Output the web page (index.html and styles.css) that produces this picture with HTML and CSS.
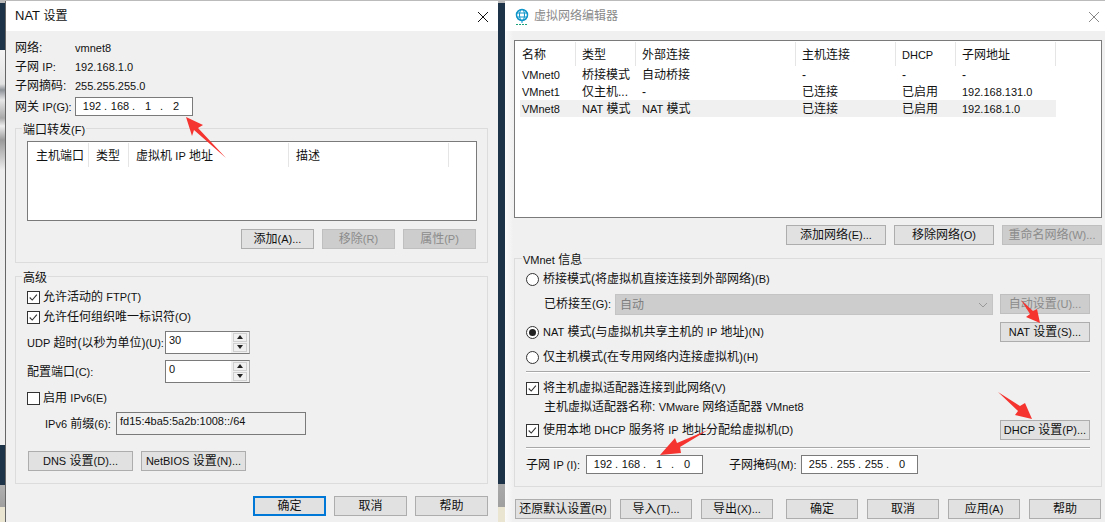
FILE: index.html
```html
<!DOCTYPE html>
<html lang="zh-CN">
<head>
<meta charset="utf-8">
<title>NAT 设置</title>
<link rel="stylesheet" href="styles.css">
</head>
<body>
<div class="desktop">
  <div class="strip"></div>

  <section class="win win-nat">
    <header class="titlebar">
      <h1 class="title"><span class="title-en">NAT</span> 设置</h1>
      <svg class="close" viewBox="0 0 10 10" width="10" height="10"><path d="M0 0L10 10M10 0L0 10" stroke="#111" stroke-width="1" fill="none"/></svg>
    </header>
    <div class="body">
      <div class="info">
        <span>网络:</span><span class="en">vmnet8</span>
        <span>子网 <span class="en">IP:</span></span><span class="en">192.168.1.0</span>
        <span>子网摘码:</span><span class="en">255.255.255.0</span>
      </div>
      <div class="gateway">
        <span>网关 <span class="en">IP(G):</span></span>
        <div class="ip"><span>192</span><i>.</i><span>168</span><i>.</i><span>1</span><i>.</i><span>2</span></div>
      </div>

      <fieldset class="group group-ports">
        <legend><span>端口转发<span class="en">(F)</span></span></legend>
        <div class="list list-ports">
          <div class="head ports-cols">
            <span>主机端口</span><span>类型</span><span>虚拟机 <span class="en">IP</span> 地址</span><span>描述</span>
          </div>
        </div>
        <div class="actions actions-ports">
          <button class="btn">添加<span class="en">(A)...</span></button>
          <button class="btn off">移除<span class="en">(R)</span></button>
          <button class="btn off">属性<span class="en">(P)</span></button>
        </div>
      </fieldset>

      <fieldset class="group group-adv">
        <legend><span>高级</span></legend>
        <label class="check-row"><span class="box"><svg viewBox="0 0 13 13" width="11" height="11"><path d="M2 6.5L5 9.5L10.500 3" stroke="#333" stroke-width="1.300" fill="none"/></svg></span><span>允许活动的 <span class="en">FTP(T)</span></span></label>
        <label class="check-row"><span class="box"><svg viewBox="0 0 13 13" width="11" height="11"><path d="M2 6.5L5 9.5L10.500 3" stroke="#333" stroke-width="1.300" fill="none"/></svg></span><span>允许任何组织唯一标识符<span class="en">(O)</span></span></label>
        <div class="spin-row first">
          <span><span class="en">UDP</span> 超时(以秒为单位)<span class="en">(U):</span></span>
          <div class="spin">
            <span class="spin-val en">30</span>
            <div class="spin-btns"><b class="up"></b><b class="down"></b></div>
          </div>
        </div>
        <div class="spin-row">
          <span>配置端口<span class="en">(C):</span></span>
          <div class="spin">
            <span class="spin-val en">0</span>
            <div class="spin-btns"><b class="up"></b><b class="down"></b></div>
          </div>
        </div>
        <label class="check-row v6"><span class="box"></span><span>启用 <span class="en">IPv6(E)</span></span></label>
        <div class="prefix">
          <span><span class="en">IPv6</span> 前缀<span class="en">(6):</span></span>
          <div class="prefix-box en">fd15:4ba5:5a2b:1008::/64</div>
        </div>
        <div class="actions actions-net">
          <button class="btn wide"><span class="en">DNS</span> 设置<span class="en">(D)...</span></button>
          <button class="btn wide"><span class="en">NetBIOS</span> 设置<span class="en">(N)...</span></button>
        </div>
      </fieldset>

      <div class="actions footer-nat">
        <button class="btn primary">确定</button>
        <button class="btn">取消</button>
        <button class="btn">帮助</button>
      </div>
    </div>
  </section>

  <section class="win win-vne">
    <header class="titlebar">
      <svg class="globe" viewBox="0 0 14 18" width="14" height="18">
        <circle cx="7" cy="7" r="5.500" fill="none" stroke="#0d94c9" stroke-width="1.500"/>
        <ellipse cx="7" cy="7" rx="2.500" ry="5.500" fill="none" stroke="#0d94c9"/>
        <path d="M1.500 5H12.500M1.500 9H12.500M7 13V15" stroke="#0d94c9" fill="none"/>
        <path d="M1 16.500H13" stroke="#1aa37a" stroke-dasharray="2 1" fill="none"/>
      </svg>
      <h1 class="title title-dim">虚拟网络编辑器</h1>
      <svg class="close close-dim" viewBox="0 0 10 10" width="10" height="10"><path d="M0 0L10 10M10 0L0 10" stroke="#888" stroke-width="1" fill="none"/></svg>
    </header>
    <div class="body body-vne">
      <div class="list list-nets">
        <div class="head nets-cols">
          <span>名称</span><span>类型</span><span>外部连接</span><span>主机连接</span><span class="en">DHCP</span><span>子网地址</span>
        </div>
        <div class="net nets-cols">
          <span class="en">VMnet0</span><span>桥接模式</span><span>自动桥接</span><span>-</span><span>-</span><span>-</span>
        </div>
        <div class="net nets-cols">
          <span class="en">VMnet1</span><span>仅主机...</span><span>-</span><span>已连接</span><span>已启用</span><span class="en">192.168.131.0</span>
        </div>
        <div class="net nets-cols sel">
          <span class="en">VMnet8</span><span><span class="en">NAT</span> 模式</span><span><span class="en">NAT</span> 模式</span><span>已连接</span><span>已启用</span><span class="en">192.168.1.0</span>
        </div>
      </div>
      <div class="actions actions-nets">
        <button class="btn net-btn">添加网络<span class="en">(E)...</span></button>
        <button class="btn net-btn">移除网络<span class="en">(O)</span></button>
        <button class="btn net-btn off">重命名网络<span class="en">(W)...</span></button>
      </div>

      <fieldset class="group group-vm">
        <legend><span><span class="en">VMnet</span> 信息</span></legend>
        <label class="opt opt-first"><span class="radio"></span><span>桥接模式(将虚拟机直接连接到外部网络)<span class="en">(B)</span></span></label>
        <div class="bridge">
          <span class="bridge-label">已桥接至<span class="en">(G):</span></span>
          <div class="select"><span>自动</span>
            <svg viewBox="0 0 10 6" width="10" height="6"><path d="M1 1L5 5L9 1" stroke="#999" fill="none"/></svg>
          </div>
          <button class="btn side off">自动设置<span class="en">(U)...</span></button>
        </div>
        <div class="opt-line">
          <label class="opt"><span class="radio on"></span><span><span class="en">NAT</span> 模式(与虚拟机共享主机的 <span class="en">IP</span> 地址)<span class="en">(N)</span></span></label>
          <button class="btn side"><span class="en">NAT</span> 设置<span class="en">(S)...</span></button>
        </div>
        <label class="opt opt-host"><span class="radio"></span><span>仅主机模式(在专用网络内连接虚拟机)<span class="en">(H)</span></span></label>
        <hr class="rule rule-a">
        <label class="opt"><span class="box"><svg viewBox="0 0 13 13" width="11" height="11"><path d="M2 6.500L5 9.500L10.500 3" stroke="#333" stroke-width="1.300" fill="none"/></svg></span><span>将主机虚拟适配器连接到此网络<span class="en">(V)</span></span></label>
        <div class="adapter">主机虚拟适配器名称: <span class="en">VMware</span> 网络适配器 <span class="en">VMnet8</span></div>
        <div class="opt-line opt-dhcp">
          <label class="opt"><span class="box"><svg viewBox="0 0 13 13" width="11" height="11"><path d="M2 6.500L5 9.500L10.500 3" stroke="#333" stroke-width="1.300" fill="none"/></svg></span><span>使用本地 <span class="en">DHCP</span> 服务将 <span class="en">IP</span> 地址分配给虚拟机<span class="en">(D)</span></span></label>
          <button class="btn side"><span class="en">DHCP</span> 设置<span class="en">(P)...</span></button>
        </div>
        <hr class="rule rule-b">
        <div class="subnet">
          <span class="subnet-label">子网 <span class="en">IP (I):</span></span>
          <div class="ip ip-sub"><span>192</span><i>.</i><span>168</span><i>.</i><span>1</span><i>.</i><span>0</span></div>
          <span class="mask-label">子网掩码<span class="en">(M):</span></span>
          <div class="ip ip-sub"><span>255</span><i>.</i><span>255</span><i>.</i><span>255</span><i>.</i><span>0</span></div>
        </div>
      </fieldset>

      <div class="actions footer-vne">
        <button class="btn restore">还原默认设置<span class="en">(R)</span></button>
        <button class="btn foot">导入<span class="en">(T)...</span></button>
        <button class="btn foot split">导出<span class="en">(X)...</span></button>
        <button class="btn foot">确定</button>
        <button class="btn foot">取消</button>
        <button class="btn foot">应用<span class="en">(A)</span></button>
        <button class="btn foot">帮助</button>
      </div>
    </div>
  </section>

  <svg class="arrows" viewBox="0 0 1105 522" width="1105" height="522">
    <g fill="#f5332f">
      <polygon points="186,117 203,125 198,128 226,158 194,130 192,136"/>
      <polygon points="1021,300 1033,311 1037,309 1040,323 1026,317 1030,314"/>
      <polygon points="998,392 1020,406 1025,403 1032,419 1015,415 1018,411"/>
      <polygon points="708,430 680,447 681,453 660,455 675,438 677,443"/>
    </g>
  </svg>
</div>
</body>
</html>
```
FILE: styles.css
```css
* { box-sizing: border-box; }

html, body { margin: 0; padding: 0; }

body {
  width: 1105px;
  height: 522px;
  overflow: hidden;
  font: 12px/16px "Liberation Sans", "Noto Sans CJK SC", sans-serif;
  color: #111;
}

.en { font-size: 11px; }

.desktop {
  position: relative;
  width: 1105px;
  height: 522px;
  background: linear-gradient(#bbb 0, #bbb 3px, #1d3448 3px, #1d3448 484px, #a9a9a9 484px, #a0a0a0 507px, #e9e5d0 507px);
}

.strip {
  position: absolute;
  left: 0;
  top: 0;
  width: 5px;
  height: 522px;
  background: linear-gradient(#bbb 0, #bbb 3px, #1d3448 3px, #1d3448 50px, #f4f4f4 50px, #e2e2e2 84px, #8d9298 90px, #e6e6e6 100px, #a8a8a8 118px, #eee 126px, #9a9a9a 140px, #cfcfcf 160px, #ededed 170px, #efefef 445px, #1d3448 445px, #1d3448 485px, #b0b0b0 485px, #a0a0a0 507px, #e9e5d0 507px);
}

.win {
  position: absolute;
  top: 1px;
  height: 521px;
  background: #f0f0f0;
}

.win-nat {
  left: 5px;
  width: 493px;
  border-left: 1px solid #666;
}

.win-vne {
  left: 505px;
  width: 600px;
  background: linear-gradient(90deg, #fbfbfb, #f0f0f0 8px);
}

.titlebar {
  display: flex;
  align-items: center;
  height: 30px;
  padding: 0 3px 0 9px;
  background: #fff;
}

.win-vne .titlebar { padding-left: 10px; }

.title {
  margin: 0;
  font-size: 12px;
  font-weight: 400;
  color: #111;
}

.title-en { font-size: 13px; }

.title-dim {
  margin-left: 5px;
  color: #8a8a8a;
}

.close { margin: 1px 7px 0 auto; }
.close-dim { margin-right: 3px; }

.globe { flex: none; margin-top: 2px; }

.body { padding: 7px 10px 0 9px; }
.body-vne { padding: 9px 3px 0 9px; }

.info {
  display: grid;
  grid-template-columns: 60px 1fr;
  grid-auto-rows: 19px;
  align-items: center;
}

.gateway {
  display: grid;
  grid-template-columns: 60px 1fr;
  align-items: center;
  margin-top: 2px;
}

.ip {
  display: flex;
  width: 118px;
  height: 19px;
  padding-left: 4px;
  border: 1px solid #7a7a7a;
  background: #fff;
  font-size: 11px;
  line-height: 17px;
}

.ip span { width: 24px; text-align: center; }
.ip i { width: 4px; font-style: normal; }

.group {
  margin: 2px 0 0;
  padding: 0 10px 0 11px;
  border: 1px solid #dcdcdc;
  min-width: 0;
}

.group legend {
  height: 20px;
  margin-left: -5px;
  padding: 4px 1px 0;
}

.group legend > span { display: block; }

.group-ports { padding-bottom: 13px; }

.list {
  border: 1px solid #7a7a7a;
  background: #fff;
}

.list-ports {
  height: 80px;
  margin-top: 3px;
}

.head > span {
  display: block;
  height: 24px;
  padding-left: 7px;
  border-right: 1px solid #e5e5e5;
  line-height: 26px;
}

.ports-cols {
  display: grid;
  grid-template-columns: 60px 40px 160px 160px;
  margin: 1px 0 0 1px;
}

.actions { display: flex; }

.btn {
  flex: none;
  width: 73px;
  height: 20px;
  padding: 0;
  border: 1px solid #adadad;
  background: #e1e1e1;
  color: #111;
  font: inherit;
  line-height: 17px;
  white-space: nowrap;
}

.btn.off {
  background: #cdcdcd;
  border-color: #bfbfbf;
  color: #8b8b8b;
}

.actions-ports {
  justify-content: flex-end;
  gap: 8px;
  margin-top: 8px;
  padding-right: 1px;
}

.group-adv {
  margin-top: 3px;
  padding-bottom: 12px;
}

.check-row {
  display: flex;
  align-items: center;
  gap: 3px;
  height: 20px;
}

.group-adv legend + .check-row { margin-top: 1px; }

.box {
  display: flex;
  align-items: center;
  justify-content: center;
  flex: none;
  width: 13px;
  height: 13px;
  border: 1px solid #333;
  background: #fff;
}

.check-row.v6 { margin-top: 5px; }

.spin-row {
  display: grid;
  grid-template-columns: 138px 85px;
  align-items: center;
  margin-top: 6px;
}

.spin-row.first { margin-top: 4px; }

.spin {
  display: flex;
  height: 23px;
  border: 1px solid #7a7a7a;
  border-right-color: #adadad;
  background: #fff;
}

.spin-val {
  flex: 1;
  padding-left: 3px;
  line-height: 17px;
}

.spin-btns {
  display: flex;
  flex-direction: column;
  justify-content: center;
  gap: 1px;
  width: 18px;
  background: #f0f0f0;
  padding: 0 2px;
}

.spin-btns b {
  display: block;
  position: relative;
  height: 9px;
  background: #f0f0f0;
  border: 1px solid #d0d0d0;
}

.spin-btns b::after {
  content: "";
  position: absolute;
  left: 3px;
  top: 1px;
  border: 3px solid transparent;
  border-top: 0;
  border-bottom: 4px solid #222;
}

.spin-btns b.down::after { transform: rotate(180deg); }

.prefix {
  display: grid;
  grid-template-columns: 71px 190px;
  align-items: center;
  margin: 4px 0 0 18px;
}

.prefix-box {
  height: 23px;
  padding-left: 3px;
  border: 1px solid #7a7a7a;
  line-height: 17px;
}

.actions-net {
  gap: 8px;
  margin: 16px 0 0 1px;
}

.btn.wide { width: 105px; }

.footer-nat {
  justify-content: flex-end;
  gap: 8px;
  margin-top: 12px;
}

.btn.primary {
  border: 2px solid #0078d7;
  line-height: 15px;
}

.list-nets {
  width: 588px;
  height: 178px;
  padding: 1px 0 0 5px;
}

.nets-cols {
  display: grid;
  grid-template-columns: 56px 60px 160px 100px 60px 100px;
  width: 536px;
}

.nets-cols > span:not(:first-child) { padding-left: 6px; }
.nets-cols > span:first-child { padding-left: 2px; }

.net > span {
  line-height: 19px;
  white-space: nowrap;
}

.net { height: 17px; }
.net.sel { background: #f0f0f0; }

.actions-nets {
  justify-content: flex-end;
  gap: 8px;
  width: 588px;
  margin-top: 7px;
}

.btn.net-btn { width: 100px; }

.group-vm {
  width: 588px;
  margin-top: 3px;
  padding: 0 11px 12px 11px;
}

.group-vm legend { margin-left: -4px; }

.opt {
  display: flex;
  align-items: center;
  gap: 4px;
  height: 20px;
}

.opt-first { margin-top: 1px; }
.opt-host { margin-top: 5px; }

.radio {
  position: relative;
  flex: none;
  width: 13px;
  height: 13px;
  border: 1px solid #333;
  border-radius: 50%;
  background: #fff;
}

.radio.on::after {
  content: "";
  position: absolute;
  left: 2px;
  top: 2px;
  width: 7px;
  height: 7px;
  border-radius: 50%;
  background: #222;
}

.bridge {
  display: flex;
  align-items: flex-start;
  height: 21px;
  margin: 5px 0 0 18px;
}

.bridge-label {
  flex: none;
  width: 71px;
  line-height: 20px;
}

.select {
  display: flex;
  flex: none;
  align-items: center;
  justify-content: space-between;
  width: 378px;
  height: 21px;
  padding: 0 4px;
  background: #cdcdcd;
  border: 1px solid #c4c4c4;
  color: #7f7f7f;
}

.btn.side { width: 90px; }
.bridge .side { margin-left: 7px; }

.opt-line {
  display: flex;
  align-items: center;
  justify-content: space-between;
  height: 20px;
  margin-top: 7px;
}

.rule {
  height: 2px;
  margin: 0;
  border: 0;
  border-top: 1px solid #a8a8a8;
  border-bottom: 1px solid #fff;
}

.rule-a { margin: 4px 0 5px; }
.rule-b { margin: 7px 0 6px; }

.adapter {
  height: 19px;
  margin-left: 18px;
  line-height: 19px;
}

.opt-dhcp { margin-top: 3px; }

.subnet {
  display: flex;
  align-items: center;
  height: 19px;
}

.subnet-label { width: 60px; }
.mask-label { width: 72px; margin-left: 26px; }
.ip-sub { width: 117px; height: 19px; }

.footer-vne {
  gap: 9px;
  margin: 12px 0 0 1px;
}

.btn.restore { width: 96px; }
.btn.foot { width: 72px; }
.btn.split { margin-right: 4px; }

.arrows {
  position: absolute;
  left: 0;
  top: 0;
  pointer-events: none;
}
```
